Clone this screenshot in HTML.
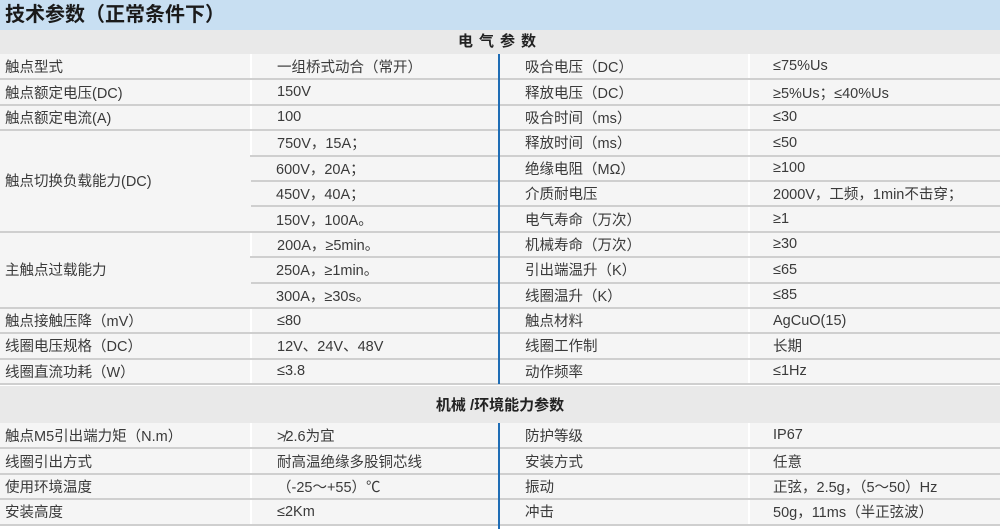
<!DOCTYPE html>
<html><head><meta charset="utf-8"><style>
*{margin:0;padding:0;box-sizing:border-box}
body{width:1000px;height:529px;background:#fff;font-family:"Liberation Sans","Noto Sans CJK SC",sans-serif;color:#3a3a3a;position:relative;overflow:hidden}
.title{position:absolute;left:0;top:0;width:1000px;height:30px;background:#c8dff2;font-size:20px;font-weight:bold;color:#1a1a1a;padding-left:5px;line-height:30px}
.sec{position:absolute;left:0;width:1000px;background:#e9e9e9;font-weight:bold;color:#222;font-size:15px;text-align:center}
table{position:absolute;left:0;width:1000px;border-collapse:collapse;table-layout:fixed}
td{background:#f5f5f5;height:25.4px;border-bottom:2px solid #cfcfcf;border-left:2px solid #fff;font-size:14.5px;padding:0;white-space:nowrap;vertical-align:middle}
td:first-child{border-left:none}
td.a{padding-left:5px}td.b{padding-left:25px}td.c{padding-left:25px}td.d{padding-left:23px}
.bl{position:absolute;left:498px;width:2px;background:#1f6db5}
</style></head><body>
<div class="title">技术参数（正常条件下）</div>
<div class="sec" style="top:30px;height:24px;line-height:24px;letter-spacing:6px">电气参数</div>
<table style="top:54px">
<colgroup><col style="width:251px"><col style="width:248px"><col style="width:250px"><col style="width:251px"></colgroup>
<tr><td class="a">触点型式</td><td class="b">一组桥式动合（常开）</td><td class="c">吸合电压（DC）</td><td class="d">≤75%Us</td></tr>
<tr><td class="a">触点额定电压(DC)</td><td class="b">150V</td><td class="c">释放电压（DC）</td><td class="d">≥5%Us；≤40%Us</td></tr>
<tr><td class="a">触点额定电流(A)</td><td class="b">100</td><td class="c">吸合时间（ms）</td><td class="d">≤30</td></tr>
<tr><td class="a" rowspan="4">触点切换负载能力(DC)</td><td class="b">750V，15A；</td><td class="c">释放时间（ms）</td><td class="d">≤50</td></tr>
<tr><td class="b">600V，20A；</td><td class="c">绝缘电阻（MΩ）</td><td class="d">≥100</td></tr>
<tr><td class="b">450V，40A；</td><td class="c">介质耐电压</td><td class="d">2000V，工频，1min不击穿；</td></tr>
<tr><td class="b">150V，100A。</td><td class="c">电气寿命（万次）</td><td class="d">≥1</td></tr>
<tr><td class="a" rowspan="3">主触点过载能力</td><td class="b">200A，≥5min。</td><td class="c">机械寿命（万次）</td><td class="d">≥30</td></tr>
<tr><td class="b">250A，≥1min。</td><td class="c">引出端温升（K）</td><td class="d">≤65</td></tr>
<tr><td class="b">300A，≥30s。</td><td class="c">线圈温升（K）</td><td class="d">≤85</td></tr>
<tr><td class="a">触点接触压降（mV）</td><td class="b">≤80</td><td class="c">触点材料</td><td class="d">AgCuO(15)</td></tr>
<tr><td class="a">线圈电压规格（DC）</td><td class="b">12V、24V、48V</td><td class="c">线圈工作制</td><td class="d">长期</td></tr>
<tr><td class="a">线圈直流功耗（W）</td><td class="b">≤3.8</td><td class="c">动作频率</td><td class="d">≤1Hz</td></tr>
</table>
<div class="sec" style="top:386px;height:37px;line-height:39px">机械 /环境能力参数</div>
<table style="top:423px">
<colgroup><col style="width:251px"><col style="width:248px"><col style="width:250px"><col style="width:251px"></colgroup>
<tr><td class="a">触点M5引出端力矩（N.m）</td><td class="b">≯2.6为宜</td><td class="c">防护等级</td><td class="d">IP67</td></tr>
<tr><td class="a">线圈引出方式</td><td class="b">耐高温绝缘多股铜芯线</td><td class="c">安装方式</td><td class="d">任意</td></tr>
<tr><td class="a">使用环境温度</td><td class="b">（-25～+55）℃</td><td class="c">振动</td><td class="d">正弦，2.5g，（5～50）Hz</td></tr>
<tr><td class="a">安装高度</td><td class="b">≤2Km</td><td class="c">冲击</td><td class="d">50g，11ms（半正弦波）</td></tr>
</table>
<div class="bl" style="top:54px;height:330px"></div>
<div class="bl" style="top:423px;height:106px"></div>
</body></html>
